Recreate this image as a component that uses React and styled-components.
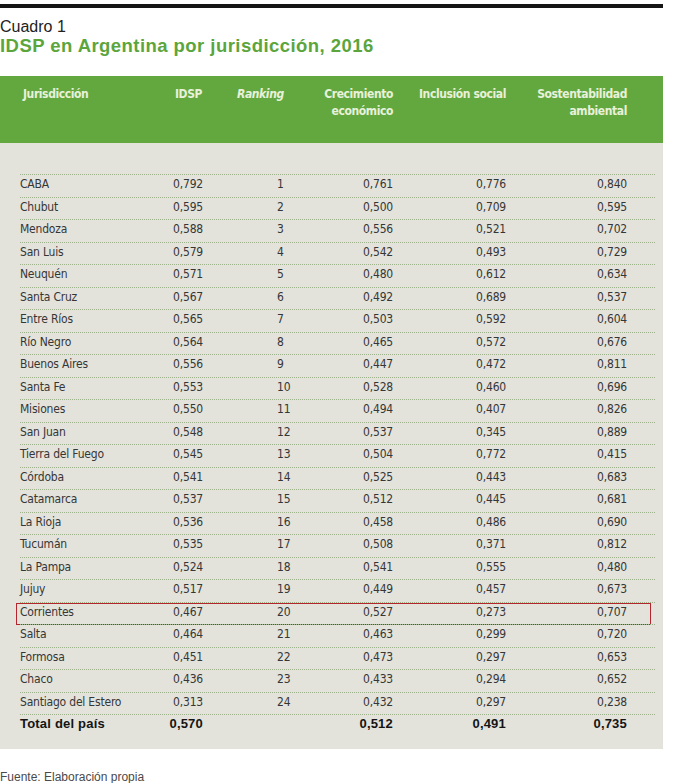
import React from "react";
import styled, { createGlobalStyle } from "styled-components";

const Global = createGlobalStyle`
  html, body { margin: 0; padding: 0; background: #ffffff; }
  body { font-family: "Liberation Sans", Arial, sans-serif; }
`;

const Page = styled.div`
  width: 663px;
  padding-top: 4px;
`;

const Rule = styled.div`
  height: 4px;
  background: #151515;
`;

const Kicker = styled.div`
  margin-top: 10px;
  font-size: 16px;
  line-height: 18px;
  color: #222;
  font-weight: 300;
`;

const Title = styled.h1`
  margin: 0;
  font-size: 18.5px;
  line-height: 20px;
  font-weight: 700;
  letter-spacing: 0.45px;
  color: #5ca53d;
`;

const HeaderBar = styled.div`
  margin-top: 20px;
  height: 67px;
  box-sizing: border-box;
  padding: 10px 8px 0 20px;
  background: #62a83f;
`;

const grid = `
  display: grid;
  grid-template-columns: 143px 40px 90px 100px 113px 121px 1fr;
  align-items: start;
`;

const HeadRow = styled.div`
  ${grid}
`;

const condensed = `"Liberation Sans Narrow", "DejaVu Sans Condensed", "Liberation Sans", sans-serif`;

const HeadCell = styled.div`
  font-family: ${condensed};
  font-weight: 700;
  font-size: 12px;
  line-height: 17px;
  letter-spacing: -0.4px;
  color: #e8f1da;
  text-align: ${(p) => p.$align || "left"};
  padding-left: ${(p) => p.$pad || 0}px;
  font-style: ${(p) => (p.$italic ? "italic" : "normal")};
  white-space: nowrap;
`;

const Panel = styled.div`
  background: #e3e3dc;
  padding: 31px 8px 12px 20px;
`;

const Row = styled.div`
  ${grid}
  position: relative;
  height: 22.5px;
  box-sizing: border-box;
  border-top: 1px dotted #9db18a;
  &::after {
    content: "";
    display: ${(p) => (p.$marked ? "block" : "none")};
    position: absolute;
    left: -4px;
    right: 4px;
    top: 0;
    bottom: -1px;
    border: 1px solid #b3262e;
    pointer-events: none;
  }
`;

const Cell = styled.div`
  font-family: ${(p) => (p.$bold ? `"Liberation Sans", Arial, sans-serif` : condensed)};
  font-weight: ${(p) => (p.$bold ? 700 : 400)};
  font-size: ${(p) => (p.$bold ? "13px" : "12px")};
  line-height: 18px;
  letter-spacing: ${(p) => (p.$bold ? "0.2px" : "-0.2px")};
  color: ${(p) => (p.$bold ? "#141414" : "#363636")};
  text-align: ${(p) => p.$align || "left"};
  padding-left: ${(p) => p.$pad || 0}px;
  white-space: nowrap;
`;

const Source = styled.div`
  margin-top: 21px;
  font-size: 12px;
  line-height: 14px;
  color: #4a4a4a;
`;

const data = [
  ["CABA", "0,792", "1", "0,761", "0,776", "0,840"],
  ["Chubut", "0,595", "2", "0,500", "0,709", "0,595"],
  ["Mendoza", "0,588", "3", "0,556", "0,521", "0,702"],
  ["San Luis", "0,579", "4", "0,542", "0,493", "0,729"],
  ["Neuquén", "0,571", "5", "0,480", "0,612", "0,634"],
  ["Santa Cruz", "0,567", "6", "0,492", "0,689", "0,537"],
  ["Entre Ríos", "0,565", "7", "0,503", "0,592", "0,604"],
  ["Río Negro", "0,564", "8", "0,465", "0,572", "0,676"],
  ["Buenos Aires", "0,556", "9", "0,447", "0,472", "0,811"],
  ["Santa Fe", "0,553", "10", "0,528", "0,460", "0,696"],
  ["Misiones", "0,550", "11", "0,494", "0,407", "0,826"],
  ["San Juan", "0,548", "12", "0,537", "0,345", "0,889"],
  ["Tierra del Fuego", "0,545", "13", "0,504", "0,772", "0,415"],
  ["Córdoba", "0,541", "14", "0,525", "0,443", "0,683"],
  ["Catamarca", "0,537", "15", "0,512", "0,445", "0,681"],
  ["La Rioja", "0,536", "16", "0,458", "0,486", "0,690"],
  ["Tucumán", "0,535", "17", "0,508", "0,371", "0,812"],
  ["La Pampa", "0,524", "18", "0,541", "0,555", "0,480"],
  ["Jujuy", "0,517", "19", "0,449", "0,457", "0,673"],
  ["Corrientes", "0,467", "20", "0,527", "0,273", "0,707"],
  ["Salta", "0,464", "21", "0,463", "0,299", "0,720"],
  ["Formosa", "0,451", "22", "0,473", "0,297", "0,653"],
  ["Chaco", "0,436", "23", "0,433", "0,294", "0,652"],
  ["Santiago del Estero", "0,313", "24", "0,432", "0,297", "0,238"],
];

const total = ["Total del país", "0,570", "", "0,512", "0,491", "0,735"];

function DataRow({ values, bold, marked }) {
  const [name, idsp, rank, crec, incl, sost] = values;
  return (
    <Row $marked={marked}>
      <Cell $bold={bold}>{name}</Cell>
      <Cell $bold={bold} $align="right">{idsp}</Cell>
      <Cell $bold={bold} $pad={74}>{rank}</Cell>
      <Cell $bold={bold} $align="right">{crec}</Cell>
      <Cell $bold={bold} $align="right">{incl}</Cell>
      <Cell $bold={bold} $align="right">{sost}</Cell>
    </Row>
  );
}

export default function App() {
  return (
    <>
      <Global />
      <Page>
        <Rule />
        <Kicker>Cuadro 1</Kicker>
        <Title>IDSP en Argentina por jurisdicción, 2016</Title>
        <HeaderBar>
          <HeadRow>
            <HeadCell $pad={3}>Jurisdicción</HeadCell>
            <HeadCell $pad={12}>IDSP</HeadCell>
            <HeadCell $pad={34} $italic>Ranking</HeadCell>
            <HeadCell $align="right">
              Crecimiento
              <br />
              económico
            </HeadCell>
            <HeadCell $align="right">Inclusión social</HeadCell>
            <HeadCell $align="right">
              Sostentabilidad
              <br />
              ambiental
            </HeadCell>
          </HeadRow>
        </HeaderBar>
        <Panel>
          {data.map((r) => (
            <DataRow key={r[0]} values={r} marked={r[0] === "Corrientes"} />
          ))}
          <DataRow values={total} bold />
        </Panel>
        <Source>Fuente: Elaboración propia</Source>
      </Page>
    </>
  );
}
